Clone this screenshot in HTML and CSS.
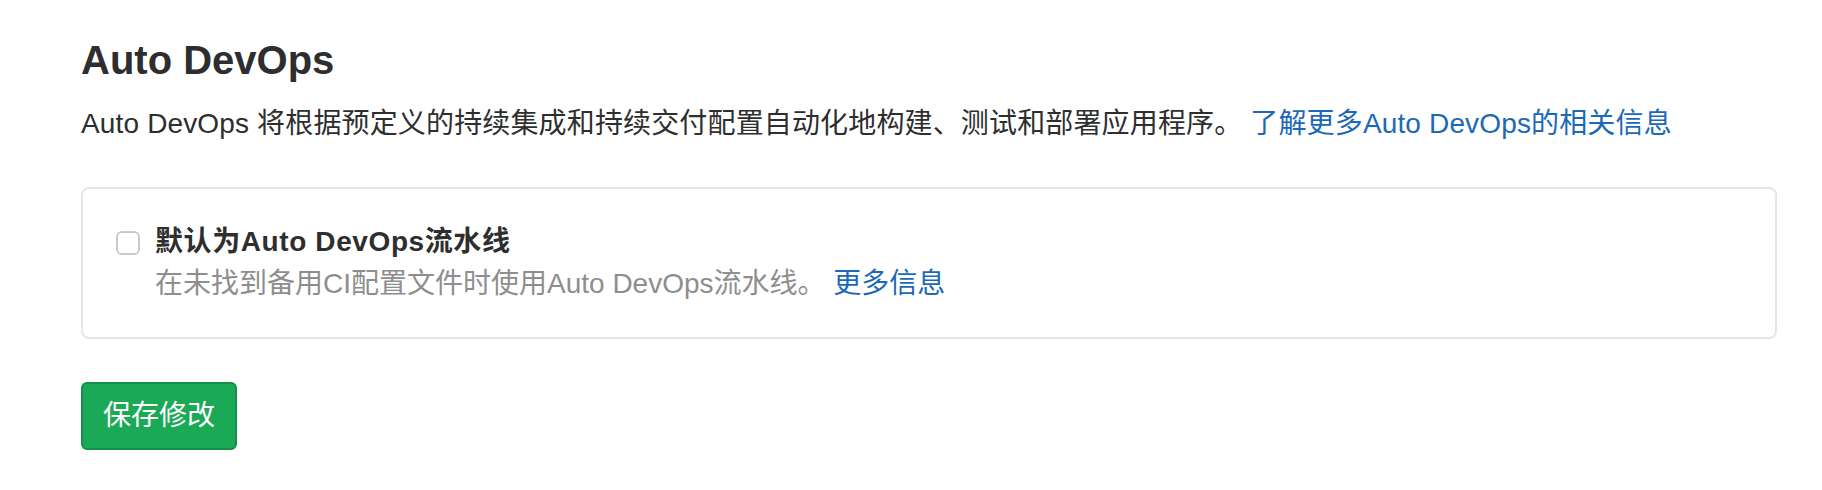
FILE: index.html
```html
<!DOCTYPE html>
<html lang="zh-CN">
<head>
<meta charset="utf-8">
<title>Auto DevOps</title>
<link rel="stylesheet" href="styles.css">
</head>
<body>
<main class="page">
  <h4 class="title">Auto DevOps</h4>
  <p class="intro">Auto DevOps 将根据预定义的持续集成和持续交付配置自动化地构建、测试和部署应用程序。 <a class="link" href="#">了解更多Auto DevOps的相关信息</a></p>
  <div class="card">
    <div class="check-row">
      <input class="checkbox" type="checkbox" id="auto-devops">
      <div class="check-text">
        <label class="check-label" for="auto-devops">默认为Auto DevOps流水线</label>
        <div class="help">在未找到备用CI配置文件时使用Auto DevOps流水线。 <a class="link" href="#">更多信息</a></div>
      </div>
    </div>
  </div>
  <button class="btn-save" type="button">保存修改</button>
</main>
</body>
</html>
```

FILE: styles.css
```css
html, body {
  margin: 0;
  padding: 0;
  background: #ffffff;
}

body {
  font-family: "Liberation Sans", "Noto Sans CJK SC", sans-serif;
  color: #2e2e2e;
}

.page {
  padding: 36px 44px 0 81px;
  display: flex;
  flex-direction: column;
  align-items: flex-start;
}

.title {
  margin: 0;
  font-size: 40px;
  line-height: 48px;
  font-weight: 700;
  color: #2e2e2e;
}

.intro {
  margin: 20px 0 0;
  font-size: 28px;
  line-height: 40px;
  letter-spacing: 0.15px;
  color: #2e2e2e;
}

.link {
  color: #1b69b6;
  text-decoration: none;
}

.card {
  margin-top: 43px;
  align-self: stretch;
  width: 1696px;
  box-sizing: border-box;
  border: 2px solid #e5e5e5;
  border-radius: 8px;
  padding: 32px 33px;
}

.check-row {
  display: flex;
  align-items: flex-start;
}

.checkbox {
  appearance: none;
  -webkit-appearance: none;
  margin: 10px 15px 0 0;
  width: 24px;
  height: 24px;
  box-sizing: border-box;
  border: 2px solid #c9c9c9;
  border-radius: 6px;
  background: #ffffff;
  flex: none;
}

.check-text {
  display: flex;
  flex-direction: column;
}

.check-label {
  font-size: 28px;
  line-height: 42px;
  font-weight: 700;
  letter-spacing: 0.6px;
  color: #2e2e2e;
}

.help {
  font-size: 28px;
  line-height: 42px;
  color: #8e8e8e;
}

.btn-save {
  margin-top: 43px;
  font-family: "Liberation Sans", "Noto Sans CJK SC", sans-serif;
  font-size: 28px;
  line-height: 40px;
  padding: 12px 20px;
  border: 2px solid #168f48;
  border-radius: 6px;
  background: #1aaa55;
  color: #ffffff;
}
```
